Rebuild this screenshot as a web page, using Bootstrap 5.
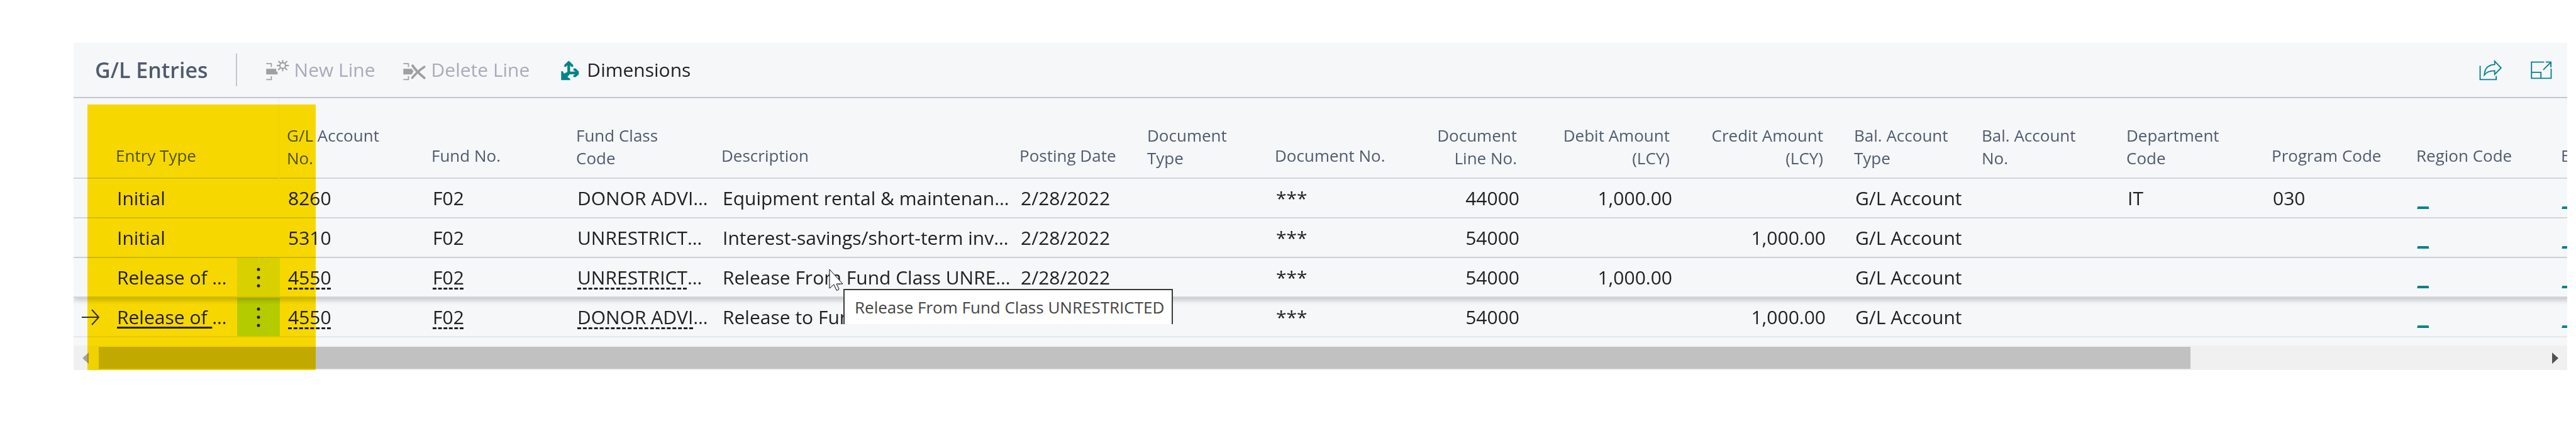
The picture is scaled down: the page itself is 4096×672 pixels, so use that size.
<!DOCTYPE html>
<html lang="en">
<head>
<meta charset="utf-8">
<meta name="viewport" content="width=device-width, initial-scale=1">
<title>G/L Entries</title>
<link href="https://cdn.jsdelivr.net/npm/bootstrap@5.3.0/dist/css/bootstrap.min.css" rel="stylesheet">
<style>
  body { font-family: "Open Sans", "Noto Sans", sans-serif; font-size: 30px; color: #212121; background: #fff; }
  .page { padding: 68px 14px 0 117px; }
  .panel { background: #f6f7f9; }
  .toolbar { height: 88px; border-bottom: 2px solid #c4c7d0; padding: 0 24px 0 34px; }
  .toolbar h1 { font-size: 34px; font-weight: 600; color: #505c6d; }
  .rule { width: 2px; height: 52px; background: #c4c7cd; margin: 0 46px 0 44px; }
  .tool { font-size: 30px; line-height: 40px; padding: 0; border: 0; border-radius: 0; color: #212121; gap: 8px; }
  .tool:disabled { color: #a6adb8; opacity: 1; border: 0; }
  .tool.main-action { gap: 12px; margin-left: 6px; }
  .tools { gap: 44px; }
  .view-tools { gap: 46px; }
  .entries { table-layout: fixed; width: 4174px; border-collapse: separate; border-spacing: 0; }
  .entries th { height: 128px; padding: 0 8px 13px 11px; vertical-align: bottom; font-size: 26px; line-height: 36px; font-weight: 400; color: #505c6d; border-bottom: 2px solid #d3d5db; white-space: nowrap; }
  .entries th.single { padding-bottom: 17px; }
  .entries th.frozen { border-right: 4px solid #f4f4f6; }
  .entries td { height: 63px; padding: 0 0 0 13px; line-height: 61px; border-bottom: 2px solid #d3d5db; white-space: nowrap; }
  .entries tr:last-child td { border-bottom-color: #e5e7ea; }
  .entries th.amount { padding-right: 38px; text-align: right; }
  .entries td.amount { padding: 0 34px 0 0; text-align: right; }
  .entries td.more { padding: 0; }
  .entries tr.hover { position: relative; box-shadow: 0 4px 8px rgba(0, 0, 0, .2); }
  .dots { height: 61px; border-radius: 0; padding: 0; border: 0; background: #d9eef2; }
  .dots.current { background: #b4e9ee; }
  .entries a { color: inherit; text-decoration: underline dashed 3px; text-underline-offset: 5px; text-decoration-skip-ink: none; }
  .entries a.solid { text-decoration-style: solid; text-underline-offset: 4px; }
  .entries a.blank { color: #00838a; font-family: "Liberation Sans", sans-serif; font-size: 32px; line-height: 1; text-decoration: underline solid 4px; text-underline-offset: 2px; }
  .scroller { height: 39px; padding: 2px 14px; background: #f0f0f0; margin-top: 13px; }
  .thumb { width: 85.6%; background: #c1c1c1; }
  .marking { left: 22px; top: 98px; bottom: -5px; width: 363px; background: #ffdf00; mix-blend-mode: multiply; z-index: 3; }
  .tip { left: 1224px; top: 391px; width: 524px; height: 56px; background: #fff; border: 2px solid #3a3a3a; border-bottom: 0; font-size: 26px; line-height: 54px; color: #444; white-space: nowrap; padding-left: 16px; z-index: 4; }
  .pointer { left: 1201px; top: 359px; z-index: 5; }
  svg { display: block; flex: none; }
</style>
</head>
<body>
<main class="page">
<section class="panel position-relative">
  <header class="toolbar d-flex align-items-center">
    <h1 class="m-0">G/L Entries</h1>
    <div class="rule"></div>
    <div class="tools d-flex align-items-center">
      <button type="button" class="tool btn d-flex align-items-center" disabled>
        <svg width="37" height="33" viewBox="20 37 123 109" fill="none" stroke="#9fa19f" stroke-width="6"><path d="M21 57h27v18M21 141h27v-18"/><path d="M21 84h53v15h7v15H21z" fill="#9fa19f" stroke="none"/><g stroke-width="7"><path d="M108 38v14M108 81v16M77 67h16M123 67h18M85 43l12 12M119 78l13 13M132 43l-12 12M97 78L84 91"/><circle cx="108" cy="67" r="15"/></g></svg>
        New Line</button>
      <button type="button" class="tool btn d-flex align-items-center" disabled>
        <svg width="37" height="33" viewBox="26 37 123 109" fill="none" stroke="#9fa19f" stroke-width="6"><path d="M27 57h27v18M27 141h27v-18"/><path d="M27 84h45l9 13-10 17H27z" fill="#9fa19f" stroke="none"/><path d="M76 68q22 32 62 64" stroke-width="13" stroke-linecap="round"/><path d="M138 74q-34 22-64 58" stroke-width="12" stroke-linecap="round"/></svg>
        Delete Line</button>
      <button type="button" class="tool main-action btn d-flex align-items-center">
        <svg width="29" height="33" viewBox="40 40 94 106"><g fill="#00838a"><path d="M73 50h14v50h30v14H73z"/><path d="M80 44l23 22v10H93l-5-7H71l-5 7h-9V66z"/><path d="M104 84h12l16 16v14l-16 15h-12v-10l10-6v-13l-10-6z"/><path d="M41 144V98h7l8 13 17-9 12 12-12 14 14 9v7z"/></g></svg>
        Dimensions</button>
    </div>
    <div class="view-tools d-flex align-items-center ms-auto">
      <button type="button" class="tool btn" aria-label="Share">
        <svg width="36" height="33" viewBox="46 38 118 108" fill="none" stroke="#00838a" stroke-width="6"><path d="M51 69v72h84v-19"/><path d="M73 117c2-34 18-53 54-54V45l33 35-33 34V95c-24 0-42 6-54 22z"/></svg></button>
      <button type="button" class="tool btn" aria-label="Expand">
        <svg width="34" height="29" viewBox="323 52 111 94" fill="none" stroke="#00838a" stroke-width="6"><path d="M393 57h-66v84h102V91M327 110h49v31M388 97l40-39M401 57h27v27"/></svg></button>
    </div>
  </header>

  <div class="overflow-hidden">
  <table class="entries">
    <colgroup>
      <col style="width:56px"><col style="width:204px"><col style="width:68px"><col style="width:230px"><col style="width:230px"><col style="width:231px"><col style="width:474px"><col style="width:203px"><col style="width:203px"><col style="width:203px"><col style="width:231px"><col style="width:243px"><col style="width:244px"><col style="width:203px"><col style="width:230px"><col style="width:231px"><col style="width:230px"><col style="width:230px"><col style="width:230px">
    </colgroup>
    <thead>
      <tr>
        <th></th><th class="single">Entry Type</th><th class="frozen"></th><th>G/L Account<br>No.</th><th class="single">Fund No.</th><th>Fund Class<br>Code</th><th class="single">Description</th><th class="single">Posting Date</th><th>Document<br>Type</th><th class="single">Document No.</th><th class="amount">Document<br>Line No.</th><th class="amount">Debit Amount<br>(LCY)</th><th class="amount">Credit Amount<br>(LCY)</th><th>Bal. Account<br>Type</th><th>Bal. Account<br>No.</th><th>Department<br>Code</th><th class="single">Program Code</th><th class="single">Region Code</th><th class="single">E</th>
      </tr>
    </thead>
    <tbody>
      <tr>
        <td></td><td>Initial</td><td></td><td>8260</td><td>F02</td><td>DONOR ADVI…</td><td>Equipment rental &amp; maintenan…</td><td>2/28/2022</td><td></td><td>***</td><td class="amount">44000</td><td class="amount">1,000.00</td><td></td><td>G/L Account</td><td></td><td>IT</td><td>030</td><td><a class="blank" href="#">_</a></td><td><a class="blank" href="#">_</a></td>
      </tr>
      <tr>
        <td></td><td>Initial</td><td></td><td>5310</td><td>F02</td><td>UNRESTRICT…</td><td>Interest-savings/short-term inv…</td><td>2/28/2022</td><td></td><td>***</td><td class="amount">54000</td><td></td><td class="amount">1,000.00</td><td>G/L Account</td><td></td><td></td><td></td><td><a class="blank" href="#">_</a></td><td><a class="blank" href="#">_</a></td>
      </tr>
      <tr class="hover">
        <td></td><td>Release of …</td>
        <td class="more"><button type="button" class="dots btn w-100 d-flex align-items-center justify-content-center" aria-label="Show more options"><svg width="6" height="34" viewBox="0 0 6 34" fill="#212121"><circle cx="3" cy="4" r="2.5"/><circle cx="3" cy="17" r="2.5"/><circle cx="3" cy="30" r="2.5"/></svg></button></td>
        <td><a href="#">4550</a></td><td><a href="#">F02</a></td><td><a href="#">UNRESTRICT</a>…</td><td>Release From Fund Class UNRE…</td><td>2/28/2022</td><td></td><td>***</td><td class="amount">54000</td><td class="amount">1,000.00</td><td></td><td>G/L Account</td><td></td><td></td><td></td><td><a class="blank" href="#">_</a></td><td><a class="blank" href="#">_</a></td>
      </tr>
      <tr>
        <td><svg width="29" height="26" viewBox="0 0 29 26" fill="none" stroke="#333" stroke-width="2"><path d="M0 13h27M16 1l11 12-11 12"/></svg></td><td><a class="solid" href="#">Release of </a>…</td>
        <td class="more"><button type="button" class="dots current btn w-100 d-flex align-items-center justify-content-center" aria-label="Show more options"><svg width="6" height="34" viewBox="0 0 6 34" fill="#212121"><circle cx="3" cy="4" r="2.5"/><circle cx="3" cy="17" r="2.5"/><circle cx="3" cy="30" r="2.5"/></svg></button></td>
        <td><a href="#">4550</a></td><td><a href="#">F02</a></td><td><a href="#">DONOR ADVI</a>…</td><td>Release to Fund Class DONOR …</td><td>2/28/2022</td><td></td><td>***</td><td class="amount">54000</td><td></td><td class="amount">1,000.00</td><td>G/L Account</td><td></td><td></td><td></td><td><a class="blank" href="#">_</a></td><td><a class="blank" href="#">_</a></td>
      </tr>
    </tbody>
  </table>
  </div>

  <div class="scroller d-flex align-items-center">
    <svg width="10" height="18" viewBox="0 0 10 18" fill="#a3a3a3"><path d="M10 0v18L0 9z"/></svg>
    <div class="flex-grow-1 align-self-stretch d-flex mx-3"><div class="thumb"></div></div>
    <svg width="10" height="18" viewBox="0 0 10 18" fill="#505050"><path d="M0 0v18l10-9z"/></svg>
  </div>

  <div class="marking position-absolute pe-none"></div>
  <div class="tip position-absolute" role="tooltip">Release From Fund Class UNRESTRICTED</div>
  <svg class="pointer position-absolute" width="24" height="36" viewBox="0 0 24 36" fill="#fff" stroke="#000"><path d="M1 1v30l7-6 4 9q3 1 4-2l-4-8h10z"/></svg>
</section>
</main>
<script src="https://cdn.jsdelivr.net/npm/bootstrap@5.3.0/dist/js/bootstrap.bundle.min.js"></script>
</body>
</html>
